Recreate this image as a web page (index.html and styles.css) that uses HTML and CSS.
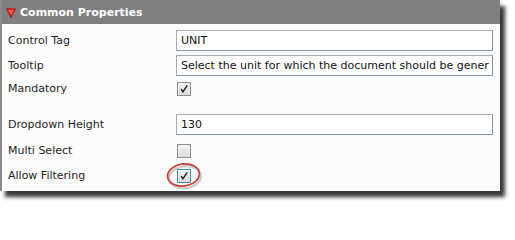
FILE: index.html
```html
<!DOCTYPE html>
<html>
<head>
<meta charset="utf-8">
<link rel="stylesheet" href="styles.css">
</head>
<body>
<div class="panel">
  <div class="header">
    <svg class="tri" width="10" height="10" viewBox="0 0 10 10"><polygon points="0.5,0.8 9.5,0.8 5,9.5" fill="#e8291c" stroke="#a81410" stroke-width="0.9"/><polygon points="2.4,2.2 7.6,2.2 5,6.4" fill="#fb6446"/></svg>
    <span class="title">Common Properties</span>
  </div>
  <div class="body">
    <div class="row r1"><span class="label">Control Tag</span><div class="input">UNIT</div></div>
    <div class="row r2"><span class="label">Tooltip</span><div class="input">Select the unit for which the document should be gener</div></div>
    <div class="row r3"><span class="label">Mandatory</span><span class="check">
      <svg width="14" height="14" viewBox="0 0 14 14"><path d="M3.5 7.2 L5.8 10.2 L10.8 2.8" fill="none" stroke="#1a1a1a" stroke-width="1.6"/></svg></span></div>
    <div class="spacer"></div>
    <div class="row r4"><span class="label">Dropdown Height</span><div class="input">130</div></div>
    <div class="row r5"><span class="label">Multi Select</span><span class="check"></span></div>
    <div class="row r6"><span class="label">Allow Filtering</span><span class="check focus">
      <svg width="14" height="14" viewBox="0 0 14 14"><path d="M3.5 7.2 L5.8 10.2 L10.8 2.8" fill="none" stroke="#1a1a1a" stroke-width="1.6"/></svg>
      <svg class="ring" width="40" height="32" viewBox="0 0 40 32"><ellipse cx="19.5" cy="15" rx="16" ry="11" fill="none" stroke="rgba(0,0,0,0.2)" stroke-width="2.2" transform="translate(1.5 2.2) rotate(-8 19.5 15)"/><ellipse cx="19.5" cy="15" rx="16" ry="11" fill="none" stroke="#cf3a36" stroke-width="1.7" transform="rotate(-8 19.5 15)"/></svg>
    </span></div>
  </div>
</div>
</body>
</html>
```
FILE: styles.css
```css
html, body { margin: 0; padding: 0; background: #ffffff; }
body { width: 515px; height: 206px; font-family: "DejaVu Sans", Verdana, sans-serif; }
.panel {
  width: 498px;
  height: 191px;
  background: #fcfcfc;
  border-left: 2px solid #8a8a8a;
  box-shadow: 5px 6px 4px rgba(20,20,20,0.85);
}
.header {
  height: 24px;
  background: #808080;
  display: flex;
  align-items: center;
  padding-left: 4px;
}
.tri { margin-top: 1px; }
.title {
  color: #ffffff;
  font-weight: bold;
  font-size: 11px;
  margin-left: 4px;
}
.body { padding-top: 4px; }
.row {
  display: flex;
  align-items: center;
  padding-left: 6px;
}
.r1, .r2 { height: 25px; }
.r3 { height: 21px; }
.spacer { height: 13px; }
.r4 { height: 25px; }
.r5 { height: 27px; }
.r6 { height: 23px; }
.label {
  width: 168px;
  font-size: 11px;
  color: #1e1e1e;
}
.input {
  width: 311px;
  height: 19px;
  border: 1px solid #a3acb6;
  border-right-color: #8795a3;
  border-bottom-color: #8795a3;
  background: #ffffff;
  font-size: 11px;
  color: #111;
  line-height: 19px;
  padding-left: 4px;
  white-space: nowrap;
  overflow: hidden;
}
.check {
  position: relative;
  margin-left: 1px;
  width: 12px;
  height: 12px;
  border: 1px solid #8e8f8f;
  background: linear-gradient(#f2f2f2, #dcdcdc);
  display: flex;
  align-items: center;
  justify-content: center;
}
.check svg { display: block; }
.check.focus { border-color: #3f8fb8; }
.check .ring {
  position: absolute;
  left: -14px;
  top: -10px;
}
```
